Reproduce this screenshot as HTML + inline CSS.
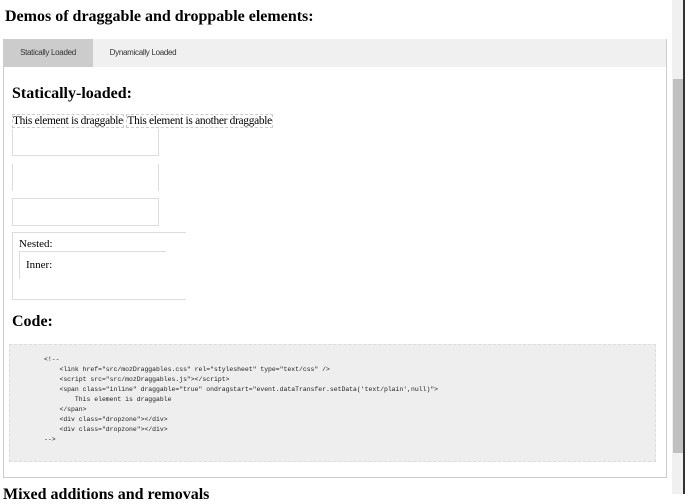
<!DOCTYPE html><html><head><style>
body{margin:0;width:685px;height:494px;overflow:hidden;background:#fff;font-family:"Liberation Serif",serif;position:relative}
.a{position:absolute}
h1{position:absolute;left:5px;top:8px;margin:0;font-size:16px;font-weight:bold}
h2{position:absolute;margin:0;font-size:16px;font-weight:bold}
.tabs{left:3px;top:39px;width:662px;height:438px;border:1px solid #ccc;border-top:none}
.bar{left:3px;top:39px;width:664px;height:28px;background:#f0f0f0}
.tab{font-family:"Liberation Sans",sans-serif;font-size:8px;letter-spacing:-0.3px;top:0;height:28px;line-height:28px;text-align:center;color:#333}
.dz{border:1px solid #ddd}
pre{position:absolute;left:9px;top:344px;width:647px;height:118px;margin:0;background:#eee;border:1px dashed #ddd;font-family:"Liberation Mono",monospace;font-size:6.45px;line-height:10px;padding:10px 0 0 34px;box-sizing:border-box;color:#222}
.sb{left:672px;top:0;width:11px;height:494px;background:#f0f0f0}
</style></head><body>
<h1>Demos of draggable and droppable elements:</h1>
<div class="a bar"><div class="a tab" style="left:0;width:90px;background:#ccc">Statically Loaded</div><div class="a tab" style="left:90px;width:100px">Dynamically Loaded</div></div>
<div class="a tabs"></div>
<h2 style="left:12px;top:85px">Statically-loaded:</h2>
<div class="a" style="left:12px;top:115px;font-size:11.4px;line-height:13px;white-space:nowrap;letter-spacing:-0.3px"><span style="border:1px dashed #ccc">This element is draggable</span> <span style="border:1px dashed #ccc">This element is another draggable</span></div>
<div class="a dz" style="left:12px;top:129px;width:145px;height:26px;border-top:none"></div>
<div class="a" style="left:12px;top:164px;width:145px;height:27px;border-left:1px solid #ddd;border-right:1px solid #ddd"></div>
<div class="a dz" style="left:12px;top:198px;width:145px;height:26px"></div>
<div class="a" style="left:12px;top:232px;width:173px;height:66px;border:1px solid #ddd;border-right:none"></div>
<div class="a" style="left:19px;top:238px;font-size:11px">Nested:</div>
<div class="a" style="left:19px;top:251px;width:146px;height:27px;border-top:1px solid #ddd;border-left:1px solid #ddd"></div>
<div class="a" style="left:26px;top:259px;font-size:11px">Inner:</div>
<h2 style="left:12px;top:313px">Code:</h2>
<pre>&lt;!--
    &lt;link href="src/mozDraggables.css" rel="stylesheet" type="text/css" /&gt;
    &lt;script src="src/mozDraggables.js"&gt;&lt;/script&gt;
    &lt;span class="inline" draggable="true" ondragstart="event.dataTransfer.setData('text/plain',null)"&gt;
        This element is draggable
    &lt;/span&gt;
    &lt;div class="dropzone"&gt;&lt;/div&gt;
    &lt;div class="dropzone"&gt;&lt;/div&gt;
--&gt;</pre>
<h2 style="left:3px;top:486px">Mixed additions and removals</h2>
<div class="a sb"></div>
<div class="a" style="left:673px;top:79px;width:10px;height:374px;background:#c0c0c0"></div>
<div class="a" style="left:683px;top:0;width:2px;height:494px;background:#333"></div>
</body></html>
